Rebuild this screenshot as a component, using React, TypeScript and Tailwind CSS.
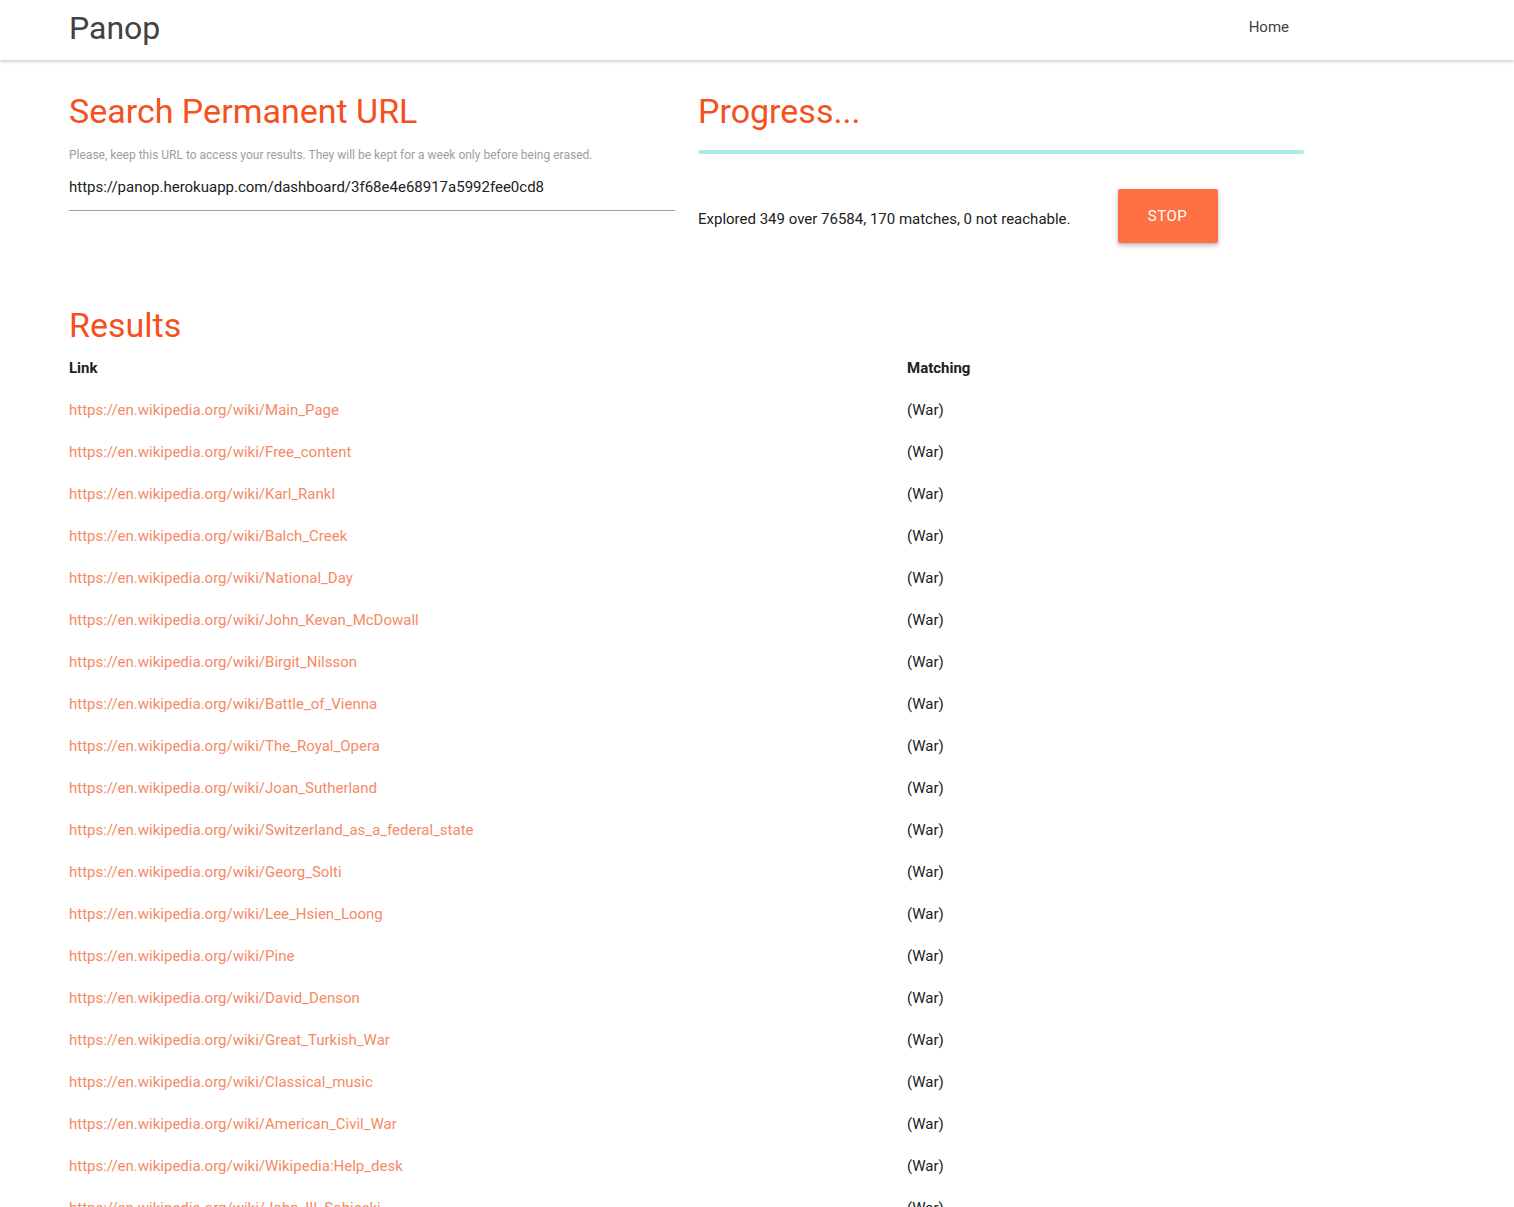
const results = [
  'Main_Page',
  'Free_content',
  'Karl_Rankl',
  'Balch_Creek',
  'National_Day',
  'John_Kevan_McDowall',
  'Birgit_Nilsson',
  'Battle_of_Vienna',
  'The_Royal_Opera',
  'Joan_Sutherland',
  'Switzerland_as_a_federal_state',
  'Georg_Solti',
  'Lee_Hsien_Loong',
  'Pine',
  'David_Denson',
  'Great_Turkish_War',
  'Classical_music',
  'American_Civil_War',
  'Wikipedia:Help_desk',
  'John_III_Sobieski',
]

const App = () => {
  return (
    <div className="min-h-screen bg-white font-['Roboto',sans-serif] text-[#212121]">
      <nav className="h-[60px] bg-white shadow-[0_2px_3px_rgba(0,0,0,0.18)]">
        <div className="ml-[69px] flex h-full w-[1235px] items-center justify-between pb-[5px]">
          <a className="text-[32px] leading-none text-[#424242]">Panop</a>
          <a className="px-[15px] text-[15px] text-[#424242]">Home</a>
        </div>
      </nav>

      <main className="ml-[69px] w-[1235px]">
        <div className="flex gap-[23px]">
          <section className="w-[606px]">
            <h4 className="mt-[31px] text-[34px] leading-[40px] text-[#f4511e]">Search Permanent URL</h4>
            <p className="mt-[16px] text-[12px] leading-[16px] text-[#9e9e9e]">
              Please, keep this URL to access your results. They will be kept for a week only before being erased.
            </p>
            <div className="mt-[12px] border-b border-[#9e9e9e] pb-[11px] text-[15px] leading-[24px] text-[#212121]">
              https://panop.herokuapp.com/dashboard/3f68e4e68917a5992fee0cd8
            </div>
          </section>

          <section className="w-[606px]">
            <h4 className="mt-[31px] text-[34px] leading-[40px] text-[#f4511e]">Progress...</h4>
            <div className="mt-[19px] h-[4px] rounded-full bg-[#acece6]" />
            <div className="mt-[35px] flex items-center gap-[47px]">
              <span className="pt-[6px] text-[15px] text-[#212121]">
                Explored 349 over 76584, 170 matches, 0 not reachable.
              </span>
              <button className="h-[54px] w-[100px] rounded-[2px] bg-[#ff7043] text-[15px] tracking-[0.5px] text-white shadow-[0_3px_5px_rgba(0,0,0,0.2),0_1px_3px_rgba(0,0,0,0.12)]">
                STOP
              </button>
            </div>
          </section>
        </div>

        <h4 className="mt-[62px] text-[34px] leading-[40px] text-[#f4511e]">Results</h4>
        <div className="mt-[2px] text-[15px]">
          <div className="grid h-[42px] grid-cols-[838px_1fr] items-center font-bold text-[#212121]">
            <span>Link</span>
            <span>Matching</span>
          </div>
          {results.map((r) => (
            <div key={r} className="grid h-[42px] grid-cols-[838px_1fr] items-center">
              <a className="text-[#f58a66]">https://en.wikipedia.org/wiki/{r}</a>
              <span className="text-[#212121]">(War)</span>
            </div>
          ))}
        </div>
      </main>
    </div>
  )
}

export default App
